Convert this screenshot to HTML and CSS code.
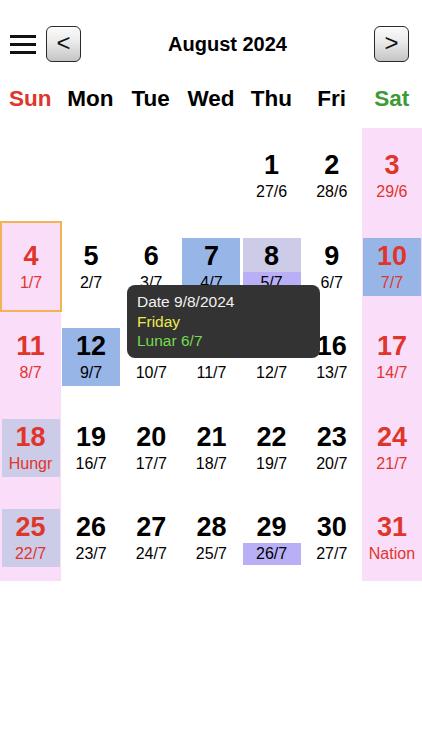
FILE: index.html
```html
<!DOCTYPE html>
<html>
<head>
<meta charset="utf-8">
<link rel="stylesheet" href="styles.css">
</head>
<body>
<div class="page">
  <div class="topbar">
    <svg class="menu" width="26" height="20" viewBox="0 0 26 20">
      <rect x="0" y="1" width="26" height="3" fill="#111"/>
      <rect x="0" y="9" width="26" height="3" fill="#111"/>
      <rect x="0" y="17" width="26" height="3" fill="#111"/>
    </svg>
    <div class="btn">&lt;</div>
    <div class="title">August 2024</div>
    <div class="btn">&gt;</div>
  </div>
  <div class="weekdays">
    <div class="wd sun">Sun</div>
    <div class="wd">Mon</div>
    <div class="wd">Tue</div>
    <div class="wd">Wed</div>
    <div class="wd">Thu</div>
    <div class="wd">Fri</div>
    <div class="wd sat">Sat</div>
  </div>
  <div class="grid">
    <div class="cell"></div>
    <div class="cell"></div>
    <div class="cell"></div>
    <div class="cell"></div>
    <div class="cell"><div class="day"><div class="num">1</div><div class="lun">27/6</div></div></div>
    <div class="cell"><div class="day"><div class="num">2</div><div class="lun">28/6</div></div></div>
    <div class="cell we"><div class="day red"><div class="num">3</div><div class="lun">29/6</div></div></div>

    <div class="cell we today"><div class="day red"><div class="num">4</div><div class="lun">1/7</div></div></div>
    <div class="cell"><div class="day"><div class="num">5</div><div class="lun">2/7</div></div></div>
    <div class="cell"><div class="day"><div class="num">6</div><div class="lun">3/7</div></div></div>
    <div class="cell"><div class="day blue"><div class="num">7</div><div class="lun">4/7</div></div></div>
    <div class="cell"><div class="day lav"><div class="num">8</div><div class="lun purple">5/7</div></div></div>
    <div class="cell"><div class="day"><div class="num">9</div><div class="lun">6/7</div></div></div>
    <div class="cell we"><div class="day red blue"><div class="num">10</div><div class="lun">7/7</div></div></div>

    <div class="cell we"><div class="day red"><div class="num">11</div><div class="lun">8/7</div></div></div>
    <div class="cell"><div class="day blue"><div class="num">12</div><div class="lun">9/7</div></div></div>
    <div class="cell"><div class="day"><div class="num">13</div><div class="lun">10/7</div></div></div>
    <div class="cell"><div class="day"><div class="num">14</div><div class="lun">11/7</div></div></div>
    <div class="cell"><div class="day"><div class="num">15</div><div class="lun">12/7</div></div></div>
    <div class="cell"><div class="day"><div class="num">16</div><div class="lun">13/7</div></div></div>
    <div class="cell we"><div class="day red"><div class="num">17</div><div class="lun">14/7</div></div></div>

    <div class="cell we"><div class="day red lav"><div class="num">18</div><div class="lun">Hungr</div></div></div>
    <div class="cell"><div class="day"><div class="num">19</div><div class="lun">16/7</div></div></div>
    <div class="cell"><div class="day"><div class="num">20</div><div class="lun">17/7</div></div></div>
    <div class="cell"><div class="day"><div class="num">21</div><div class="lun">18/7</div></div></div>
    <div class="cell"><div class="day"><div class="num">22</div><div class="lun">19/7</div></div></div>
    <div class="cell"><div class="day"><div class="num">23</div><div class="lun">20/7</div></div></div>
    <div class="cell we"><div class="day red"><div class="num">24</div><div class="lun">21/7</div></div></div>

    <div class="cell we"><div class="day red lav"><div class="num">25</div><div class="lun">22/7</div></div></div>
    <div class="cell"><div class="day"><div class="num">26</div><div class="lun">23/7</div></div></div>
    <div class="cell"><div class="day"><div class="num">27</div><div class="lun">24/7</div></div></div>
    <div class="cell"><div class="day"><div class="num">28</div><div class="lun">25/7</div></div></div>
    <div class="cell"><div class="day"><div class="num">29</div><div class="lun purple">26/7</div></div></div>
    <div class="cell"><div class="day"><div class="num">30</div><div class="lun">27/7</div></div></div>
    <div class="cell we"><div class="day red"><div class="num">31</div><div class="lun">Nation</div></div></div>
  </div>
  <div class="tooltip">
    <div class="tt-date">Date 9/8/2024</div>
    <div class="tt-day">Friday</div>
    <div class="tt-lunar">Lunar 6/7</div>
  </div>
</div>
</body>
</html>
```

FILE: styles.css
```css
html, body {
  margin: 0;
  padding: 0;
  background: #fff;
}
body {
  font-family: "Liberation Sans", Arial, sans-serif;
  color: #000;
}
.page {
  position: relative;
  width: 422px;
  height: 750px;
}
.topbar {
  height: 88px;
  display: flex;
  align-items: center;
  padding: 0 13px 0 10px;
  box-sizing: border-box;
}
.menu {
  display: block;
  margin-right: 10px;
}
.btn {
  width: 33px;
  height: 32px;
  border: 1.5px solid #2a2a2a;
  border-radius: 6px;
  background: linear-gradient(to bottom, #fbfbfb 0%, #eaeaea 45%, #c4c4c4 100%);
  display: flex;
  align-items: center;
  justify-content: center;
  font-size: 24px;
  line-height: 1;
  color: #111;
  padding-bottom: 2px;
  box-sizing: content-box;
  box-shadow: inset 0 1px 0 #fff;
}
.title {
  flex: 1;
  text-align: center;
  font-weight: bold;
  font-size: 20px;
}
.weekdays {
  display: grid;
  grid-template-columns: repeat(7, 1fr);
  height: 22px;
  line-height: 22px;
}
.wd {
  text-align: center;
  font-weight: bold;
  font-size: 22.5px;
}
.wd.sun { color: #e0352b; }
.wd.sat { color: #3e9a35; }
.grid {
  margin-top: 18px;
  display: grid;
  grid-template-columns: repeat(7, 1fr);
  grid-auto-rows: 90.6px;
}
.cell {
  display: flex;
  justify-content: center;
  align-items: flex-start;
  box-sizing: border-box;
}
.cell.we {
  background: #f9ddf9;
}
.cell.today {
  border: 2px solid #f2b353;
  margin-top: 2px;
  height: 91px;
  margin-right: -1px;
  position: relative;
  z-index: 1;
}
.day {
  width: 58px;
  height: 58px;
  margin-top: 19px;
  display: flex;
  flex-direction: column;
  text-align: center;
}
.cell.today .day {
  margin-top: 15px;
}
.num {
  height: 34px;
  line-height: 36px;
  font-weight: bold;
  font-size: 27px;
}
.lun {
  height: 22px;
  line-height: 22px;
  font-size: 16px;
}
.day.red { color: #e0352b; }
.day.blue { background: #98b5e8; }
.day.lav { background: #cccbe8; }
.lun.purple { background: #b9aff6; }
.tooltip {
  position: absolute;
  z-index: 2;
  left: 127px;
  top: 285px;
  width: 193px;
  height: 73px;
  box-sizing: border-box;
  padding: 7px 10px;
  background: #333333;
  border-radius: 8px;
  font-size: 15.5px;
  line-height: 19.5px;
}
.tt-date { color: #f2f2f2; }
.tt-day { color: #eaea4c; }
.tt-lunar { color: #74dc4f; }
```
